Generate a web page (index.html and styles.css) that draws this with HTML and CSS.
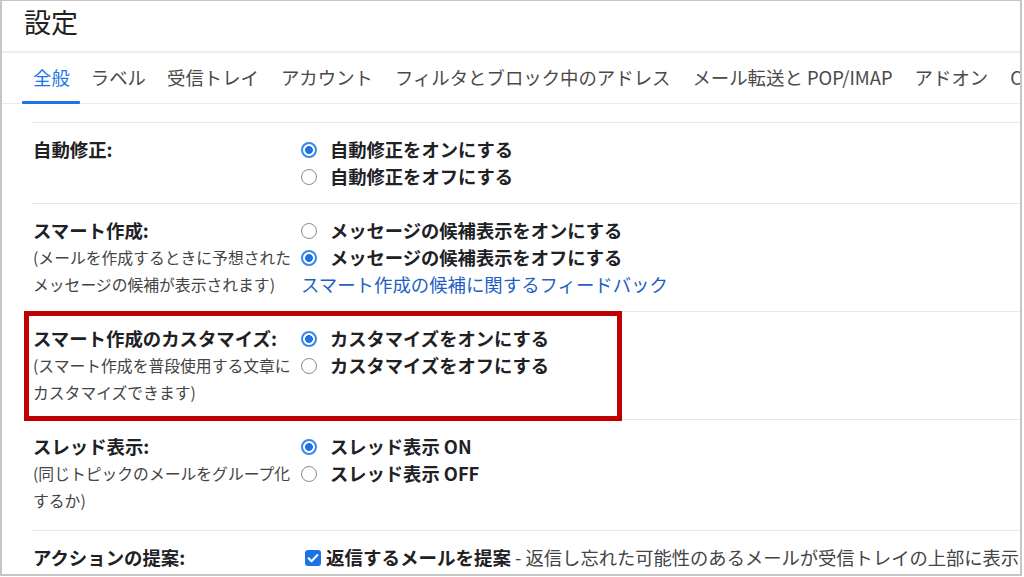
FILE: index.html
```html
<!DOCTYPE html>
<html lang="ja">
<head>
<meta charset="utf-8">
<title>設定</title>
<link rel="stylesheet" href="styles.css">
</head>
<body>
<div class="frame">
  <header class="title-bar"><h1>設定</h1></header>
  <nav class="tabs">
    <span class="tab active">全般</span>
    <span class="tab narrow">ラベル</span>
    <span class="tab">受信トレイ</span>
    <span class="tab">アカウント</span>
    <span class="tab">フィルタとブロック中のアドレス</span>
    <span class="tab">メール転送と POP/IMAP</span>
    <span class="tab">アドオン</span>
    <span class="tab">Chat と Meet</span>
  </nav>
  <div class="spacer"></div>
  <section class="settings">
    <div class="row">
      <div class="label"><div class="lbl">自動修正:</div></div>
      <div class="opts">
        <div class="opt"><span class="radio on"></span>自動修正をオンにする</div>
        <div class="opt"><span class="radio"></span>自動修正をオフにする</div>
      </div>
    </div>
    <div class="row">
      <div class="label">
        <div class="lbl">スマート作成:</div>
        <div class="sub">(メールを作成するときに予想された<br>メッセージの候補が表示されます)</div>
      </div>
      <div class="opts">
        <div class="opt"><span class="radio"></span>メッセージの候補表示をオンにする</div>
        <div class="opt"><span class="radio on"></span>メッセージの候補表示をオフにする</div>
        <div class="link">スマート作成の候補に関するフィードバック</div>
      </div>
    </div>
    <div class="row marked">
      <div class="label">
        <div class="lbl">スマート作成のカスタマイズ:</div>
        <div class="sub">(スマート作成を普段使用する文章に<br>カスタマイズできます)</div>
      </div>
      <div class="opts">
        <div class="opt"><span class="radio on"></span>カスタマイズをオンにする</div>
        <div class="opt"><span class="radio"></span>カスタマイズをオフにする</div>
      </div>
      <div class="highlight"></div>
    </div>
    <div class="row tall">
      <div class="label">
        <div class="lbl">スレッド表示:</div>
        <div class="sub">(同じトピックのメールをグループ化<br>するか)</div>
      </div>
      <div class="opts">
        <div class="opt"><span class="radio on"></span>スレッド表示 ON</div>
        <div class="opt"><span class="radio"></span>スレッド表示 OFF</div>
      </div>
    </div>
    <div class="row">
      <div class="label">
        <div class="lbl">アクションの提案:</div>
        <div class="sub sublink">詳細を表示</div>
      </div>
      <div class="opts">
        <div class="opt check"><span class="cb"><svg viewBox="0 0 16 16" width="16" height="16"><path d="M3.6 8.3l2.9 2.9 5.9-6.2" fill="none" stroke="#fff" stroke-width="2" stroke-linecap="round" stroke-linejoin="round"/></svg></span>返信するメールを提案<span class="desc">&nbsp;- 返信し忘れた可能性のあるメールが受信トレイの上部に表示されます</span></div>
      </div>
    </div>
  </section>
</div>
</body>
</html>
```

FILE: styles.css
```css
* { box-sizing: border-box; }

body {
  margin: 0;
  background: #fff;
  font-family: "Noto Sans CJK JP", "Noto Sans", sans-serif;
  color: #202124;
}

.frame {
  width: 1022px;
  height: 576px;
  border: 1px solid #c6c6c6;
  border-left-width: 2px;
  border-right-width: 2px;
  border-bottom-width: 2px;
  overflow: hidden;
  background: #fff;
}

.title-bar {
  height: 52px;
  border-bottom: 2px solid #eeeeee;
  padding: 7px 0 0 22px;
}

.title-bar h1 {
  margin: 0;
  font-size: 27px;
  font-weight: 400;
  line-height: 28px;
  color: #222;
}

.tabs {
  display: flex;
  height: 51px;
  border-bottom: 1px solid #ebebeb;
  padding: 0 0 2px 20px;
  white-space: nowrap;
}

.tab {
  position: relative;
  display: flex;
  align-items: center;
  padding: 0 11px;
  font-size: 18.4px;
  color: #4a4a4a;
  flex: none;
}

.tab.active {
  color: #1a73e8;
  padding-right: 10px;
}

.tab.narrow { padding-right: 10px; }

.tab.active::after {
  content: "";
  position: absolute;
  left: 0;
  right: 0;
  bottom: -3px;
  height: 3px;
  background: #1a73e8;
  border-radius: 1px;
}

.spacer { height: 18px; }

.settings { margin-left: 30px; }

.row {
  display: grid;
  grid-template-columns: 268px 1fr;
  border-top: 1px solid #e8e8e8;
  padding: 13px 0 13px 1px;
  line-height: 27px;
}

.row.tall { padding-bottom: 16px; }

.row.marked { position: relative; }

.highlight {
  position: absolute;
  left: -8px;
  top: -1px;
  width: 598px;
  height: 110px;
  border: 5px solid #c00000;
}

.lbl {
  font-size: 18.4px;
  font-weight: 700;
  color: #202124;
  white-space: nowrap;
}

.sub {
  font-size: 15.8px;
  color: #444;
  white-space: nowrap;
}

.sublink { color: #1f5fc4; }

.opt {
  display: flex;
  align-items: center;
  height: 27px;
  font-size: 18.3px;
  font-weight: 700;
  color: #202124;
  white-space: nowrap;
}

.radio {
  flex: none;
  width: 16px;
  height: 16px;
  margin-right: 13px;
  border-radius: 50%;
  border: 1px solid #8c8c8c;
  background: #fff;
}

.radio.on {
  border: 2px solid #3b86e6;
  background: radial-gradient(circle, #1a73e8 0 3.6px, #fff 4.2px);
}

.link {
  font-size: 18.4px;
  color: #1f5fc4;
  white-space: nowrap;
}

.check {
  margin-left: 4px;
  font-size: 18.5px;
}

.cb {
  flex: none;
  width: 16px;
  height: 16px;
  margin-right: 5px;
  border-radius: 3px;
  background: #1a73e8;
  display: flex;
}

.desc {
  font-weight: 400;
  font-size: 18.3px;
  color: #444;
}
```
